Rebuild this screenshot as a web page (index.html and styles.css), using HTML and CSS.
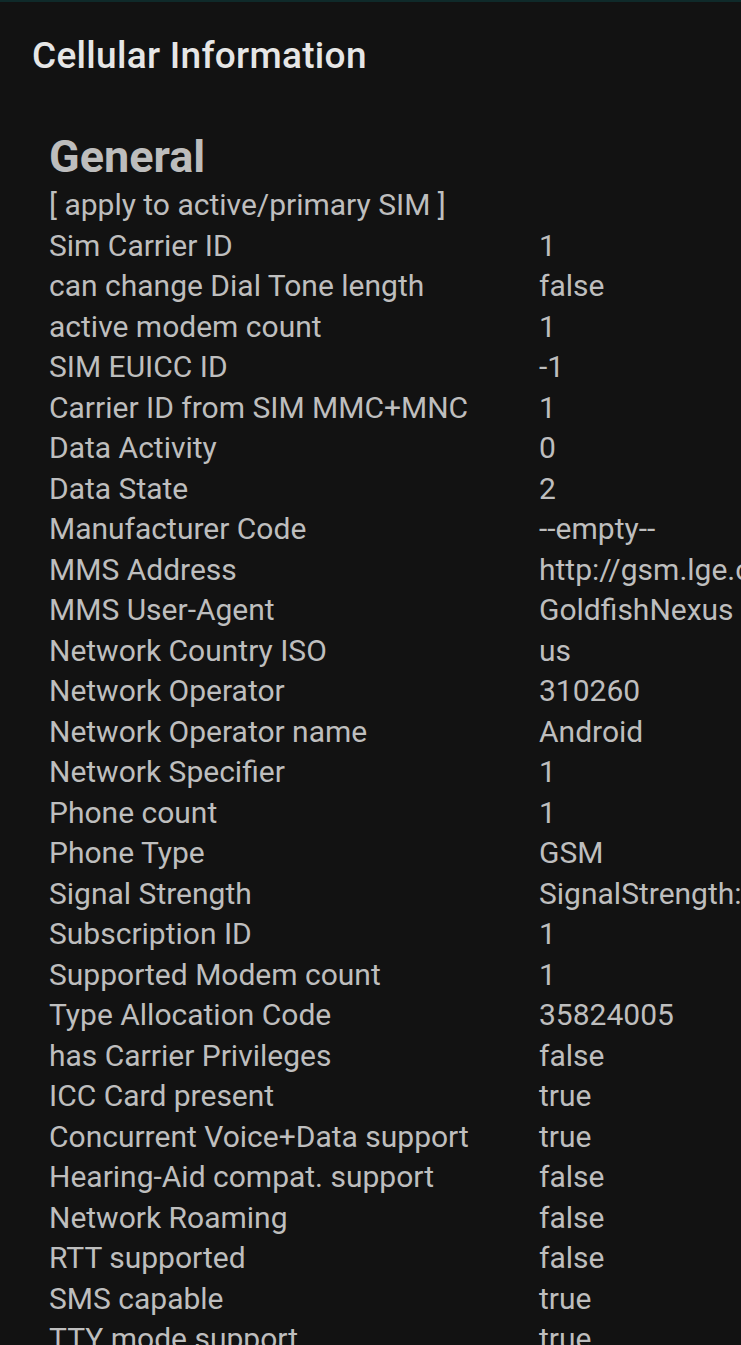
FILE: index.html
```html
<!DOCTYPE html>
<html>
<head>
<meta charset="utf-8">
<link rel="stylesheet" href="styles.css">
</head>
<body>
<div class="screen">
  <header class="appbar"><h1 class="title">Cellular Information</h1></header>
  <main class="content">
    <h2 class="section">General</h2>
    <div class="note">[ apply to active/primary SIM ]</div>
    <div class="table">
      <div class="k">Sim Carrier ID</div><div class="v">1</div>
      <div class="k">can change Dial Tone length</div><div class="v">false</div>
      <div class="k">active modem count</div><div class="v">1</div>
      <div class="k">SIM EUICC ID</div><div class="v">-1</div>
      <div class="k">Carrier ID from SIM MMC+MNC</div><div class="v">1</div>
      <div class="k">Data Activity</div><div class="v">0</div>
      <div class="k">Data State</div><div class="v">2</div>
      <div class="k">Manufacturer Code</div><div class="v">--empty--</div>
      <div class="k">MMS Address</div><div class="v">http://gsm.lge.com/mms/LG_NEXUS_5.xml</div>
      <div class="k">MMS User-Agent</div><div class="v">GoldfishNexus</div>
      <div class="k">Network Country ISO</div><div class="v">us</div>
      <div class="k">Network Operator</div><div class="v">310260</div>
      <div class="k">Network Operator name</div><div class="v">Android</div>
      <div class="k">Network Specifier</div><div class="v">1</div>
      <div class="k">Phone count</div><div class="v">1</div>
      <div class="k">Phone Type</div><div class="v">GSM</div>
      <div class="k">Signal Strength</div><div class="v">SignalStrength:{mCdma=Invalid,mGsm=CellSignalStrengthGsm}</div>
      <div class="k">Subscription ID</div><div class="v">1</div>
      <div class="k">Supported Modem count</div><div class="v">1</div>
      <div class="k">Type Allocation Code</div><div class="v">35824005</div>
      <div class="k">has Carrier Privileges</div><div class="v">false</div>
      <div class="k">ICC Card present</div><div class="v">true</div>
      <div class="k">Concurrent Voice+Data support</div><div class="v">true</div>
      <div class="k">Hearing-Aid compat. support</div><div class="v">false</div>
      <div class="k">Network Roaming</div><div class="v">false</div>
      <div class="k">RTT supported</div><div class="v">false</div>
      <div class="k">SMS capable</div><div class="v">true</div>
      <div class="k">TTY mode support</div><div class="v">true</div>
    </div>
  </main>
</div>
</body>
</html>
```
FILE: styles.css
```css
html, body {
  margin: 0;
  padding: 0;
  background: #121212;
  height: 100%;
  overflow: hidden;
}
body {
  font-family: Roboto, "Liberation Sans", sans-serif;
}
.screen {
  border-top: 2px solid #0f2a2a;
  min-height: 100%;
  overflow: hidden;
}
.appbar {
  padding: 33px 0 0 32px;
}
.title {
  margin: 0;
  font-size: 37px;
  line-height: 42px;
  font-weight: 500;
  letter-spacing: 0.3px;
  color: #e6e6e6;
}
.content {
  padding: 54px 0 0 49px;
}
.section {
  margin: 0 0 2px 0;
  font-size: 45px;
  line-height: 52px;
  font-weight: 700;
  color: #bdbdbd;
}
.note, .table {
  font-size: 30px;
  line-height: 40.5px;
  color: #bebebe;
  white-space: nowrap;
}
.table {
  display: grid;
  grid-template-columns: 490px 1fr;
}
```
